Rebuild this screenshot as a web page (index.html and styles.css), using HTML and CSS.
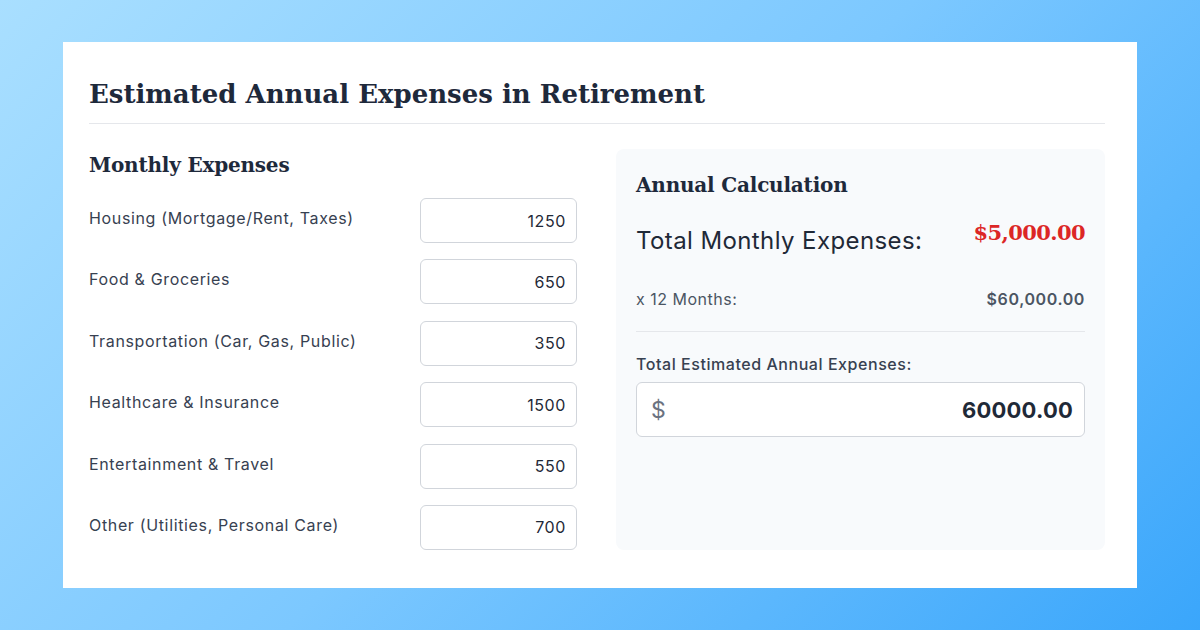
FILE: index.html
```html
<!DOCTYPE html>
<html lang="en">
<head>
<meta charset="utf-8">
<title>Estimated Annual Expenses in Retirement</title>
<link rel="stylesheet" href="styles.css">
</head>
<body>
<main class="card">
  <h1 class="title">Estimated Annual Expenses in Retirement</h1>
  <div class="grid">
    <section class="monthly">
      <h2 class="section-title">Monthly Expenses</h2>
      <div class="rows">
        <div class="row"><label class="label">Housing (Mortgage/Rent, Taxes)</label><input class="field" type="text" value="1250"></div>
        <div class="row"><label class="label">Food &amp; Groceries</label><input class="field" type="text" value="650"></div>
        <div class="row"><label class="label">Transportation (Car, Gas, Public)</label><input class="field" type="text" value="350"></div>
        <div class="row"><label class="label">Healthcare &amp; Insurance</label><input class="field" type="text" value="1500"></div>
        <div class="row"><label class="label">Entertainment &amp; Travel</label><input class="field" type="text" value="550"></div>
        <div class="row"><label class="label">Other (Utilities, Personal Care)</label><input class="field" type="text" value="700"></div>
      </div>
    </section>
    <section class="panel">
      <h2 class="panel-title">Annual Calculation</h2>
      <div class="total-row">
        <span class="total-label">Total Monthly Expenses:</span>
        <span class="total-value">$5,000.00</span>
      </div>
      <div class="months-row">
        <span class="months-label">x 12 Months:</span>
        <span class="months-value">$60,000.00</span>
      </div>
      <div class="divider"></div>
      <div class="annual-label">Total Estimated Annual Expenses:</div>
      <div class="annual-box">
        <span class="currency">$</span>
        <span class="annual-value">60000.00</span>
      </div>
    </section>
  </div>
</main>
</body>
</html>
```

FILE: styles.css
```css
* { box-sizing: border-box; }
html, body { margin: 0; padding: 0; }
body {
  width: 1200px;
  height: 630px;
  background: linear-gradient(135deg, #a9dfff 0%, #7cc8ff 50%, #3aa6fb 100%);
  display: flex;
  align-items: center;
  justify-content: center;
  font-family: Inter, "Noto Sans", sans-serif;
  color: #1f2937;
}
.card {
  width: 1074px;
  height: 546px;
  background: #ffffff;
  padding: 35px 32px 0 26px;
}
.title {
  margin: 0;
  font-family: "DejaVu Serif", serif;
  font-weight: 700;
  font-size: 26px;
  line-height: 34px;
  color: #1e293b;
  padding-bottom: 12px;
  border-bottom: 1px solid #e5e7eb;
  letter-spacing: 0;
}
.grid {
  margin-top: 25px;
  display: grid;
  grid-template-columns: 488px 1fr;
  column-gap: 39px;
}
.section-title, .panel-title {
  margin: 0;
  font-family: "DejaVu Serif", serif;
  font-weight: 700;
  font-size: 20px;
  line-height: 27px;
  color: #1e293b;
  letter-spacing: -0.2px;
}
.section-title { margin-top: 3px; margin-bottom: 19px; }
.rows { display: flex; flex-direction: column; gap: 16.4px; }
.row {
  display: flex;
  justify-content: space-between;
  align-items: center;
}
.label {
  font-size: 16px;
  line-height: 24px;
  color: #374151;
  letter-spacing: 0.65px;
  margin-top: -5px;
}
.field {
  width: 157px;
  height: 45px;
  border: 1px solid #d1d5db;
  border-radius: 6px;
  background: #fff;
  text-align: right;
  padding: 0 10px;
  font-family: Inter, "Noto Sans", sans-serif;
  font-size: 16px;
  letter-spacing: 0.6px;
  color: #1f2937;
  outline: none;
}
.panel {
  background: #f8fafc;
  border-radius: 8px;
  padding: 23px 20px 20px 20px;
  height: 401px;
}
.panel-title { margin-bottom: 16px; }
.total-row {
  display: flex;
  justify-content: space-between;
  align-items: flex-start;
}
.total-label {
  font-size: 24px;
  line-height: 36px;
  color: #1f2937;
  letter-spacing: 0.4px;
  margin-top: 8px;
}
.total-value {
  font-family: "DejaVu Serif", serif;
  font-weight: 700;
  font-size: 21px;
  line-height: 32px;
  color: #dc2626;
  letter-spacing: -0.6px;
  margin-top: 2px;
}
.months-row {
  display: flex;
  justify-content: space-between;
  margin-top: 28px;
  font-size: 16px;
  line-height: 24px;
  color: #4b5563;
  letter-spacing: 0.5px;
}
.months-value { font-weight: 600; letter-spacing: 0.6px; }
.divider {
  height: 1px;
  background: #e5e7eb;
  margin-top: 20px;
}
.annual-label {
  margin-top: 20px;
  font-size: 16px;
  line-height: 24px;
  font-weight: 500;
  color: #374151;
  letter-spacing: 0.55px;
}
.annual-box {
  margin-top: 6px;
  height: 55px;
  background: #fff;
  border: 1px solid #d1d5db;
  border-radius: 6px;
  display: flex;
  align-items: center;
  justify-content: space-between;
  padding: 0 11px 0 14px;
}
.currency {
  font-size: 23px;
  color: #6b7280;
}
.annual-value {
  font-size: 22px;
  font-weight: 700;
  color: #1f2937;
  letter-spacing: 0.2px;
}
```
